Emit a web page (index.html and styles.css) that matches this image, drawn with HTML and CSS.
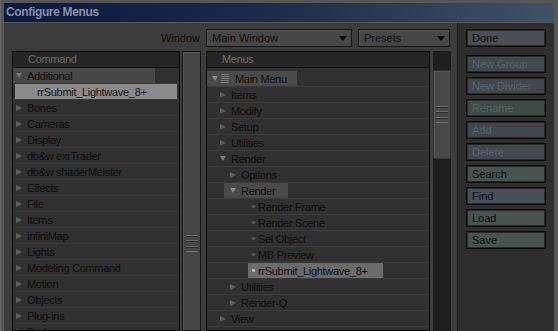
FILE: index.html
```html
<!DOCTYPE html>
<html lang="en">
<head>
    <meta charset="UTF-8">
    <title>Configure Menus</title>
    <link rel="stylesheet" href="styles.css">
</head>
<body>
    <div class="window">
        <div class="titlebar">Configure Menus</div>
        <div class="client">
            <div class="main">
                <div class="toolbar">
                    <span class="label">Window</span>
                    <div class="dropdown wide">Main Window<i class="drop-arrow"></i></div>
                    <div class="dropdown narrow">Presets<i class="drop-arrow"></i></div>
                </div>
                <div class="panes">
                    <div class="list commands">
                        <div class="list-head">Command</div>
                        <div class="list-body">
                            <div class="row"><span class="item c0 sel-additional"><i class="tri down"></i>Additional</span></div>
                            <div class="row"><span class="item c1 sel-sub">rrSubmit_Lightwave_8+</span></div>
                            <div class="row"><span class="item c0"><i class="tri"></i>Bones</span></div>
                            <div class="row"><span class="item c0"><i class="tri"></i>Cameras</span></div>
                            <div class="row"><span class="item c0"><i class="tri"></i>Display</span></div>
                            <div class="row"><span class="item c0"><i class="tri"></i>db&amp;w exrTrader</span></div>
                            <div class="row"><span class="item c0"><i class="tri"></i>db&amp;w shaderMeister</span></div>
                            <div class="row"><span class="item c0"><i class="tri"></i>Effects</span></div>
                            <div class="row"><span class="item c0"><i class="tri"></i>File</span></div>
                            <div class="row"><span class="item c0"><i class="tri"></i>Items</span></div>
                            <div class="row"><span class="item c0"><i class="tri"></i>infiniMap</span></div>
                            <div class="row"><span class="item c0"><i class="tri"></i>Lights</span></div>
                            <div class="row"><span class="item c0"><i class="tri"></i>Modeling Command</span></div>
                            <div class="row"><span class="item c0"><i class="tri"></i>Motion</span></div>
                            <div class="row"><span class="item c0"><i class="tri"></i>Objects</span></div>
                            <div class="row"><span class="item c0"><i class="tri"></i>Plug-ins</span></div>
                            <div class="row"><span class="item c0"><i class="tri"></i>Preferences</span></div>
                        </div>
                    </div>
                    <div class="scroll-l"><div class="grip"></div></div>
                    <div class="list menus">
                        <div class="list-head">Menus</div>
                        <div class="list-body">
                            <div class="row"><span class="item m0 sel sel-main"><i class="tri down"></i><i class="menu-icon"></i>Main Menu</span></div>
                            <div class="row"><span class="item m1"><i class="tri"></i>Items</span></div>
                            <div class="row"><span class="item m1"><i class="tri"></i>Modify</span></div>
                            <div class="row"><span class="item m1"><i class="tri"></i>Setup</span></div>
                            <div class="row"><span class="item m1"><i class="tri"></i>Utilities</span></div>
                            <div class="row"><span class="item m1"><i class="tri down"></i>Render</span></div>
                            <div class="row"><span class="item m2"><i class="tri"></i>Options</span></div>
                            <div class="row"><span class="item m2 sel sel-render"><i class="tri down"></i>Render</span></div>
                            <div class="row"><span class="item m3"><i class="dot"></i>Render Frame</span></div>
                            <div class="row"><span class="item m3"><i class="dot"></i>Render Scene</span></div>
                            <div class="row"><span class="item m3"><i class="dot"></i>Sel Object</span></div>
                            <div class="row"><span class="item m3"><i class="dot"></i>MB Preview</span></div>
                            <div class="row"><span class="item m3 sel-submit"><i class="dot"></i>rrSubmit_Lightwave_8+</span></div>
                            <div class="row"><span class="item m2"><i class="tri"></i>Utilities</span></div>
                            <div class="row"><span class="item m2"><i class="tri"></i>Render-Q</span></div>
                            <div class="row"><span class="item m1"><i class="tri"></i>View</span></div>
                            <div class="row"></div>
                        </div>
                    </div>
                    <div class="scroll-m">
                        <div class="thumb"><div class="grip"></div></div>
                    </div>
                </div>
            </div>
            <div class="side">
                <div class="btn blue first">Done</div>
                <div class="btn blue off">New Group</div>
                <div class="btn blue off">New Divider</div>
                <div class="btn green off">Rename</div>
                <div class="btn blue off">Add</div>
                <div class="btn blue off">Delete</div>
                <div class="btn green">Search</div>
                <div class="btn blue">Find</div>
                <div class="btn green">Load</div>
                <div class="btn green">Save</div>
            </div>
        </div>
    </div>
</body>
</html>
```

FILE: styles.css
```css
* {
    box-sizing: border-box;
}
body {
    margin: 0;
    background-color: #5a5a5a;
    font-family: 'Liberation Sans', Arial, sans-serif;
    font-size: 11px;
    color: #0c0c0c;
}
.window {
    width: 558px;
    height: 331px;
    overflow: hidden;
    display: flex;
    flex-direction: column;
    padding: 3px 4px 0 3px;
    border-left: 1px solid #666;
    background-color: #565656;
}
.titlebar {
    flex: none;
    height: 19px;
    margin-bottom: 1px;
    padding-left: 2px;
    line-height: 19px;
    font-size: 12px;
    font-weight: bold;
    letter-spacing: -0.35px;
    color: #8890a5;
    background: linear-gradient(to right, #0a1740, #1e2b4a 50%, #405266);
}
.client {
    flex: 1;
    display: flex;
    min-height: 0;
}
.main {
    width: 453px;
    display: flex;
    flex-direction: column;
    min-height: 0;
    padding: 6px 0 0 8px;
    background-color: #3c3c3c;
}

/* top row */
.toolbar {
    flex: none;
    height: 18px;
    display: flex;
    align-items: center;
    justify-content: flex-end;
    padding-right: 7px;
    margin-bottom: 4px;
}
.label {
    margin-right: 6px;
}
.dropdown {
    height: 18px;
    display: flex;
    align-items: center;
    justify-content: space-between;
    padding: 0 4px 0 5px;
    background-color: #474747;
    border: 1px solid #141414;
    box-shadow: inset 1px 1px 0 #525252;
}
.dropdown.wide {
    width: 146px;
    margin-right: 6px;
}
.dropdown.narrow {
    width: 92px;
}
.drop-arrow {
    width: 1px;
    height: 0;
    border-top: 5px solid #0a0a0a;
    border-left: 4px solid transparent;
    border-right: 4px solid transparent;
}

/* lists */
.panes {
    flex: 1;
    display: flex;
    min-height: 0;
}
.list {
    display: flex;
    flex-direction: column;
    overflow: hidden;
    border: 1px solid #0a0a0a;
    background-color: #303030;
}
.list.commands {
    width: 168px;
    margin-right: 2px;
}
.list.menus {
    width: 224px;
    margin-right: 3px;
}
.list-head {
    flex: none;
    height: 16px;
    padding-left: 15px;
    line-height: 15px;
    letter-spacing: -0.3px;
    color: #6b6b6b;
    background-color: #252525;
    border-bottom: 1px solid #111;
}
.list-body {
    flex: 1;
}
.menus .list-body {
    padding-top: 3px;
}
.row {
    height: 16px;
    display: flex;
    border-bottom: 1px solid #393939;
    letter-spacing: -0.3px;
}
.item {
    display: flex;
    align-items: center;
    white-space: nowrap;
}
.tri {
    width: 0;
    height: 0;
    margin-right: 5px;
    border-left: 6px solid #5e5e5e;
    border-top: 3px solid transparent;
    border-bottom: 3px solid transparent;
}
.tri.down {
    border-top: 5px solid #7a7a7a;
    border-left: 3px solid transparent;
    border-right: 3px solid transparent;
    border-bottom: 0;
}
.dot {
    width: 3px;
    height: 3px;
    margin-right: 3px;
    border-radius: 1px;
    background-color: #585858;
}
.menu-icon {
    width: 8px;
    height: 9px;
    margin-right: 6px;
    background: repeating-linear-gradient(to bottom, #767676 0 1px, transparent 1px 2px);
}

.c0 {
    padding-left: 3px;
}
.c1 {
    padding-left: 22px;
}
.m0 {
    padding-left: 5px;
}
.m0 .tri {
    margin-right: 3px;
}
.m1 {
    padding-left: 13px;
}
.m2 {
    margin-left: 17px;
    padding-left: 6px;
}
.m3 {
    margin-left: 41px;
    padding-left: 4px;
}

.sel {
    background-color: #4a4a4a;
}
.sel .tri.down {
    border-top-color: #8a8a8a;
}
.sel-main {
    width: 90px;
}
.sel-render {
    width: 64px;
}
.sel-additional {
    width: 142px;
    background-color: #474747;
}
.sel-sub {
    flex: 1;
    margin: 0 2px;
    color: #151515;
    background-color: #8a8a8a;
}
.sel-submit {
    width: 135px;
    background-color: #6b6b6b;
}
.sel-submit .dot {
    background-color: #b5b5b5;
}

/* scrollbars */
.scroll-l {
    width: 19px;
    margin-right: 5px;
    padding-top: 183px;
    border: 1px solid #141414;
    background-color: #454545;
    box-shadow: inset 1px 1px 0 #555;
}
.scroll-m {
    width: 18px;
    padding-top: 19px;
    background-color: #1f1f1f;
}
.thumb {
    height: 89px;
    display: flex;
    align-items: center;
    justify-content: center;
    border: 1px solid #353535;
    background-color: #484848;
    box-shadow: inset 1px 1px 0 #575757;
}
.grip {
    width: 12px;
    height: 17px;
    margin: 0 auto;
    background: repeating-linear-gradient(to bottom, #6c6c6c 0 1px, #2a2a2a 1px 2px, transparent 2px 5.33px);
}

/* button column */
.side {
    width: 97px;
    display: flex;
    flex-direction: column;
    gap: 4px;
    padding: 6px 0 0 8px;
    border-left: 1px solid #1c1c1c;
    background-color: #2e2e2e;
}
.btn {
    width: 80px;
    height: 18px;
    padding-left: 5px;
    line-height: 16px;
    border: 1px solid #080808;
    box-shadow: inset 0 0 0 1px #26282c;
}
.btn.first {
    margin-bottom: 4px;
}
.btn.blue {
    background-color: #4a4e57;
}
.btn.green {
    background-color: #48524e;
}
.btn.off {
    color: #5c6069;
}
.btn.blue.off {
    background-color: #42464e;
}
.btn.green.off {
    color: #58625e;
    background-color: #404a46;
}
```
